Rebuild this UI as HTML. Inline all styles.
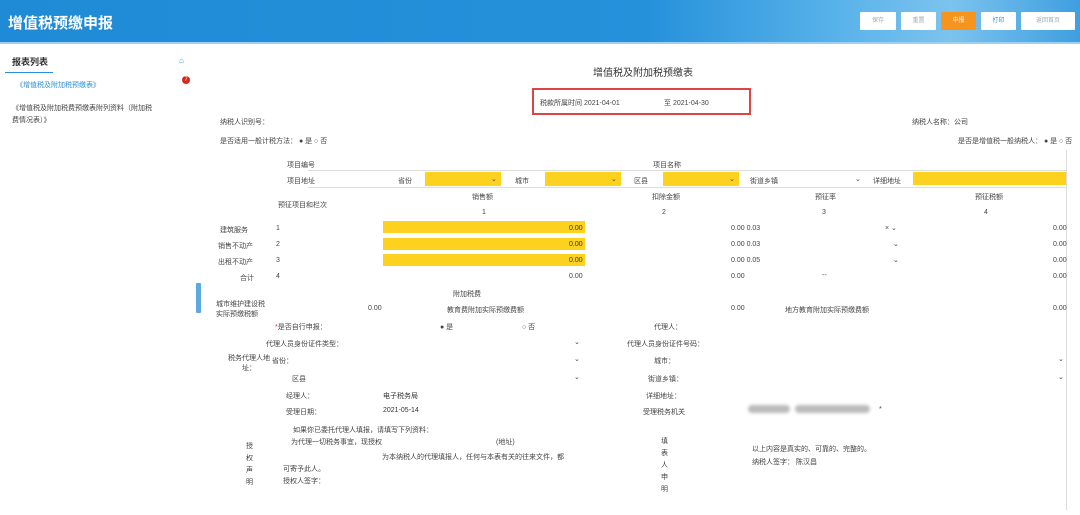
<!DOCTYPE html>
<html><head><meta charset="utf-8"><style>
*{margin:0;padding:0;box-sizing:border-box}
body{width:1080px;height:515px;overflow:hidden;background:#fff;font-family:"Liberation Sans","Noto Sans CJK SC",sans-serif;font-size:7px;color:#444;position:relative}
.a{position:absolute;white-space:nowrap}
.hd{position:absolute;left:0;top:0;width:1080px;height:43px;background:linear-gradient(90deg,#1f8bd6 0%,#2591db 60%,#5ab3ea 78%,#7cc3ee 88%,#3e9fe0 100%)}
.hl{position:absolute;left:0;top:42px;width:1080px;height:2px;background:#9fd0f2}
.btn{position:absolute;top:12px;height:18px;background:#fff;border-radius:1px;font-size:6px;color:#9ab;text-align:center;line-height:18px}
.y{position:absolute;background:#fdd21e}
.ln{position:absolute;background:#ddd}
</style></head><body>
<div class="hd"></div><div class="hl"></div>
<div class="a" style="left:8px;top:12px;font-size:15px;font-weight:bold;color:#fff">增值税预缴申报</div>
<div class="btn" style="left:860px;width:36px">保存</div>
<div class="btn" style="left:901px;width:35px">重置</div>
<div class="btn" style="left:941px;width:35px;background:#f7941d;color:#fff">申报</div>
<div class="btn" style="left:981px;width:35px;color:#2a8fd8">打印</div>
<div class="btn" style="left:1021px;width:54px">返回首页</div>

<div class="a" style="left:12px;top:55px;font-size:9px;font-weight:bold;color:#333">报表列表</div>
<div class="a" style="left:5px;top:72px;width:48px;height:1px;background:#2a8fd8"></div>
<div class="a" style="left:179px;top:56px;font-size:8px;color:#2a8fd8">⌂</div>
<div class="a" style="left:16px;top:80px;color:#2a8fd8">《增值税及附加税预缴表》</div>
<div class="a" style="left:182px;top:76px;width:8px;height:8px;border-radius:50%;background:#d9261c;color:#fff;font-size:6px;text-align:center;line-height:8px">7</div>
<div class="a" style="left:12px;top:103px;color:#444">《增值税及附加税费预缴表附列资料（附加税</div>
<div class="a" style="left:12px;top:115px;color:#444">费情况表）》</div>
<div class="a" style="left:196px;top:283px;width:5px;height:30px;background:#5aa9e0;border-radius:1px"></div>

<div class="a" style="left:593px;top:64px;font-size:10px;color:#333">增值税及附加税预缴表</div>
<div class="a" style="left:532px;top:88px;width:219px;height:27px;border:2px solid #d44;"></div>
<div class="a" style="left:540px;top:98px">税款所属时间 2021-04-01</div>
<div class="a" style="left:664px;top:98px">至 2021-04-30</div>
<div class="a" style="left:220px;top:117px">纳税人识别号：</div>
<div class="a" style="left:912px;top:117px">纳税人名称：公司</div>
<div class="a" style="left:220px;top:136px">是否适用一般计税方法：  ● 是  ○ 否</div>
<div class="a" style="left:958px;top:136px">是否是增值税一般纳税人： ● 是  ○ 否</div>
<div class="ln" style="left:1066px;top:150px;width:1px;height:360px"></div>

<div class="a" style="left:287px;top:160px">项目编号</div>
<div class="a" style="left:653px;top:160px">项目名称</div>
<div class="a" style="left:287px;top:176px">项目地址</div>
<div class="ln" style="left:308px;top:170px;width:758px;height:1px"></div>
<div class="a" style="left:398px;top:176px">省份</div>
<div class="y" style="left:425px;top:172px;width:76px;height:14px"></div><div class="a" style="left:491px;top:175px">⌄</div>
<div class="a" style="left:515px;top:176px">城市</div>
<div class="y" style="left:545px;top:172px;width:76px;height:14px"></div><div class="a" style="left:611px;top:175px">⌄</div>
<div class="a" style="left:634px;top:176px">区县</div>
<div class="y" style="left:663px;top:172px;width:76px;height:14px"></div><div class="a" style="left:729px;top:175px">⌄</div>
<div class="a" style="left:750px;top:176px">街道乡镇</div><div class="a" style="left:855px;top:175px">⌄</div>
<div class="a" style="left:873px;top:176px">详细地址</div>
<div class="y" style="left:913px;top:172px;width:153px;height:13px"></div>
<div class="ln" style="left:308px;top:187px;width:758px;height:1px"></div>
<div class="a" style="left:278px;top:200px">预征项目和栏次</div>
<div class="a" style="left:472px;top:192px">销售额</div>
<div class="a" style="left:652px;top:192px">扣除金额</div>
<div class="a" style="left:815px;top:192px">预征率</div>
<div class="a" style="left:975px;top:192px">预征税额</div>
<div class="a" style="left:482px;top:209px">1</div><div class="a" style="left:662px;top:209px">2</div><div class="a" style="left:822px;top:209px">3</div><div class="a" style="left:984px;top:209px">4</div>

<div class="a" style="left:220px;top:225px">建筑服务</div><div class="a" style="left:276px;top:225px">1</div>
<div class="a" style="left:218px;top:241px">销售不动产</div><div class="a" style="left:276px;top:241px">2</div>
<div class="a" style="left:218px;top:257px">出租不动产</div><div class="a" style="left:276px;top:257px">3</div>
<div class="a" style="left:240px;top:273px">合计</div><div class="a" style="left:276px;top:273px">4</div>
<div class="y" style="left:383px;top:221px;width:202px;height:12px"></div><div class="a" style="left:569px;top:225px;color:#333">0.00</div>
<div class="y" style="left:383px;top:238px;width:202px;height:12px"></div><div class="a" style="left:569px;top:241px;color:#333">0.00</div>
<div class="y" style="left:383px;top:254px;width:202px;height:12px"></div><div class="a" style="left:569px;top:257px;color:#333">0.00</div>
<div class="a" style="left:569px;top:273px">0.00</div>
<div class="a" style="left:731px;top:225px">0.00 0.03</div><div class="a" style="left:885px;top:224px">× ⌄</div>
<div class="a" style="left:731px;top:241px">0.00 0.03</div><div class="a" style="left:893px;top:240px">⌄</div>
<div class="a" style="left:731px;top:257px">0.00 0.05</div><div class="a" style="left:893px;top:256px">⌄</div>
<div class="a" style="left:731px;top:273px">0.00</div><div class="a" style="left:822px;top:272px">--</div>
<div class="a" style="left:1053px;top:225px">0.00</div><div class="a" style="left:1053px;top:241px">0.00</div><div class="a" style="left:1053px;top:257px">0.00</div><div class="a" style="left:1053px;top:273px">0.00</div>
<div class="a" style="left:453px;top:289px">附加税费</div>
<div class="a" style="left:216px;top:299px">城市维护建设税</div>
<div class="a" style="left:216px;top:309px">实际预缴税额</div>
<div class="a" style="left:368px;top:305px">0.00</div>
<div class="a" style="left:447px;top:305px">教育费附加实际预缴费额</div>
<div class="a" style="left:731px;top:305px">0.00</div>
<div class="a" style="left:785px;top:305px">地方教育附加实际预缴费额</div>
<div class="a" style="left:1053px;top:305px">0.00</div>

<div class="a" style="left:275px;top:322px"><span style="color:#d33">*</span>是否自行申报：</div>
<div class="a" style="left:440px;top:322px">● 是</div><div class="a" style="left:522px;top:322px">○ 否</div>
<div class="a" style="left:654px;top:322px">代理人：</div>
<div class="a" style="left:266px;top:339px">代理人员身份证件类型：</div><div class="a" style="left:574px;top:338px">⌄</div>
<div class="a" style="left:627px;top:339px">代理人员身份证件号码：</div>
<div class="a" style="left:228px;top:353px">税务代理人地</div><div class="a" style="left:242px;top:363px">址：</div>
<div class="a" style="left:272px;top:356px">省份：</div><div class="a" style="left:574px;top:355px">⌄</div>
<div class="a" style="left:654px;top:356px">城市：</div><div class="a" style="left:1058px;top:355px">⌄</div>
<div class="a" style="left:292px;top:374px">区县</div><div class="a" style="left:574px;top:373px">⌄</div>
<div class="a" style="left:648px;top:374px">街道乡镇：</div><div class="a" style="left:1058px;top:373px">⌄</div>
<div class="a" style="left:286px;top:391px">经理人：</div><div class="a" style="left:383px;top:391px;color:#333">电子税务局</div>
<div class="a" style="left:646px;top:391px">详细地址：</div>
<div class="a" style="left:286px;top:407px">受理日期：</div><div class="a" style="left:383px;top:407px;color:#333">2021-05-14</div>
<div class="a" style="left:643px;top:407px">受理税务机关</div>
<div class="a" style="left:748px;top:405px;width:42px;height:8px;border-radius:4px;background:#bbb;filter:blur(1.5px)"></div>
<div class="a" style="left:795px;top:405px;width:75px;height:8px;border-radius:4px;background:#bbb;filter:blur(1.5px)"></div>
<div class="a" style="left:879px;top:406px">*</div>
<div class="a" style="left:293px;top:425px">如果你已委托代理人填报，请填写下列资料：</div>
<div class="a" style="left:291px;top:437px">为代理一切税务事宜，现授权</div>
<div class="a" style="left:496px;top:437px">(地址)</div>
<div class="a" style="left:382px;top:452px">为本纳税人的代理填报人，任何与本表有关的往来文件，都</div>
<div class="a" style="left:283px;top:464px">可寄予此人。</div>
<div class="a" style="left:283px;top:476px">授权人签字：</div>
<div class="a" style="left:246px;top:441px;line-height:12px;white-space:normal;width:8px">授权声明</div>
<div class="a" style="left:661px;top:436px;line-height:12px;white-space:normal;width:8px">填表人申明</div>
<div class="a" style="left:752px;top:444px">以上内容是真实的、可靠的、完整的。</div>
<div class="a" style="left:752px;top:457px">纳税人签字：  陈汉昌</div>
</body></html>
